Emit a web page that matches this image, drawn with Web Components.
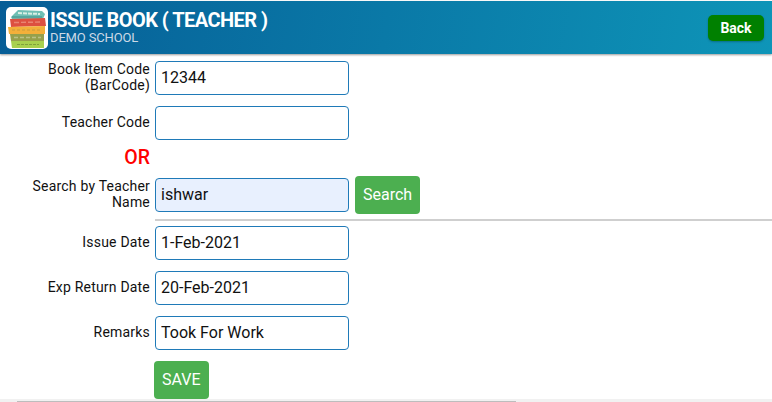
<!DOCTYPE html>
<html lang="en">
<head>
<meta charset="utf-8">
<title>Issue Book</title>
<style>
  html, body { margin: 0; padding: 0; height: 100%; overflow: hidden; background: #fff; }
  body { font-family: Roboto, "Liberation Sans", sans-serif; color: #111; }
</style>
</head>
<body>
<app-header title="ISSUE BOOK ( TEACHER )" school="DEMO SCHOOL"></app-header>
<issue-form></issue-form>
<page-scrollbar></page-scrollbar>

<script>
class AppHeader extends HTMLElement {
  constructor() {
    super();
    this.attachShadow({ mode: "open" });
  }

  connectedCallback() {
    const title = this.getAttribute("title") || "";
    const school = this.getAttribute("school") || "";

    this.shadowRoot.innerHTML = `
      <style>
        :host {
          display: flex;
          align-items: center;
          justify-content: space-between;
          box-sizing: border-box;
          height: 53px;
          margin-top: 1px;
          padding: 0 8px 0 6px;
          background: linear-gradient(100deg, #065d96 0%, #0e95b8 100%);
          box-shadow: 0 1px 2px rgba(0, 0, 0, .4);
          color: #fff;
        }

        .brand {
          display: flex;
          align-items: center;
          gap: 2px;
        }

        .logo {
          display: block;
          width: 42px;
          height: 42px;
          border-radius: 5px;
          background: #fff;
        }

        .title {
          font-size: 20px;
          font-weight: 700;
          line-height: 20px;
          letter-spacing: -.55px;
          margin-top: -1px;
        }

        .school {
          font-size: 13px;
          line-height: 14px;
          letter-spacing: -.15px;
          margin-top: 1px;
          color: #ccd9e6;
        }

        button {
          width: 56px;
          height: 26px;
          padding: 0;
          border: none;
          border-radius: 5px;
          background: #008000;
          color: #fff;
          font: 700 14px Roboto, sans-serif;
          box-shadow: 0 1px 2px rgba(0, 0, 0, .25);
        }
      </style>

      <div class="brand">
        <svg class="logo" viewBox="0 0 42 42">
          <path d="M5 10 L12 3 L36 4 L39 7 L37 12 L6 12 Z" fill="#6fbfb4"/>
          <path d="M12 6 L34 7" stroke="#d8efe4" stroke-width="2" stroke-dasharray="4 1"/>
          <path d="M6 10 L36 10" stroke="#3f8f8a" stroke-width="1"/>
          <path d="M4 12 L39 11 L40 19 L5 20 Z" fill="#dd5040"/>
          <path d="M8 15.500 L36 15" stroke="#e98572" stroke-width="1.500" stroke-dasharray="5 2"/>
          <path d="M2 20 L39 19 L39 27 L3 27 Z" fill="#f3b03a"/>
          <path d="M6 23 L36 23" stroke="#c99a3a" stroke-width="1" stroke-dasharray="3 2"/>
          <path d="M4 27 L38 27 L38 34 L5 34 Z" fill="#96a04c"/>
          <path d="M8 30.500 L35 30.500" stroke="#bcc184" stroke-width="1.500" stroke-dasharray="4 2"/>
          <path d="M5 34 L38 34 L38 41 L6 41 Z" fill="#a8d04e"/>
          <path d="M11 37.500 L33 37.500" stroke="#7fa23a" stroke-width="1" stroke-dasharray="3 1"/>
        </svg>
        <div>
          <div class="title">${title}</div>
          <div class="school">${school}</div>
        </div>
      </div>

      <button>Back</button>
    `;
  }
}

class FormRow extends HTMLElement {
  constructor() {
    super();
    this.attachShadow({ mode: "open" });
  }

  connectedCallback() {
    const label = this.getAttribute("label") || "";
    const value = this.getAttribute("value") || "";
    const bg = this.hasAttribute("filled") ? "#e8f0fe" : "#fff";

    this.shadowRoot.innerHTML = `
      <style>
        :host {
          display: grid;
          grid-template-columns: 150px 194px auto;
          grid-template-rows: 34px;
          column-gap: 5px;
          align-items: center;
          justify-content: start;
          height: 34px;
          margin-bottom: 11px;
        }

        label {
          padding-bottom: 2px;
          font-size: 14px;
          line-height: 16px;
          letter-spacing: .2px;
          text-align: right;
          color: #111;
        }

        input {
          box-sizing: border-box;
          width: 194px;
          height: 34px;
          padding: 0 5px 2px;
          border: 1px solid #1f7ab8;
          border-radius: 4px;
          background: ${bg};
          color: #111;
          font: 16px Roboto, sans-serif;
          outline: none;
        }

        .extra {
          margin-left: 1px;
        }
      </style>

      <label>${label}</label>
      <input type="text" value="${value}">
      <div class="extra"><slot></slot></div>
    `;
  }
}

class GreenButton extends HTMLElement {
  constructor() {
    super();
    this.attachShadow({ mode: "open" });
  }

  connectedCallback() {
    this.shadowRoot.innerHTML = `
      <style>
        :host {
          display: block;
        }

        button {
          display: block;
          height: 38px;
          padding: 0 8px 2px;
          border: none;
          border-radius: 4px;
          background: #4caf50;
          color: #fff;
          font: 16px Roboto, sans-serif;
        }
      </style>

      <button><slot></slot></button>
    `;
  }
}

class IssueForm extends HTMLElement {
  constructor() {
    super();
    this.attachShadow({ mode: "open" });
  }

  connectedCallback() {
    this.shadowRoot.innerHTML = `
      <style>
        :host {
          display: block;
          padding-top: 7px;
        }

        .or {
          width: 150px;
          margin: -4px 0 9px;
          text-align: right;
          color: #ff0000;
          font-size: 19.5px;
          font-weight: 500;
          line-height: 22px;
        }

        hr {
          height: 2px;
          margin: -4px 0 5px 155px;
          border: none;
          background: #cfcfcf;
        }

        .actions {
          padding-left: 154px;
        }

        .actions green-button {
          width: 55px;
        }
      </style>

      <form-row label="Book Item Code (BarCode)" value="12344"></form-row>
      <form-row label="Teacher Code"></form-row>
      <div class="or">OR</div>
      <form-row label="Search by Teacher Name" value="ishwar" filled>
        <green-button>Search</green-button>
      </form-row>
      <hr>
      <form-row label="Issue Date" value="1-Feb-2021"></form-row>
      <form-row label="Exp Return Date" value="20-Feb-2021"></form-row>
      <form-row label="Remarks" value="Took For Work"></form-row>
      <div class="actions"><green-button>SAVE</green-button></div>
    `;
  }
}

// thin horizontal scrollbar sitting over the bottom edge of the page
class PageScrollbar extends HTMLElement {
  constructor() {
    super();
    this.attachShadow({ mode: "open" });
  }

  connectedCallback() {
    this.shadowRoot.innerHTML = `
      <style>
        :host {
          display: block;
          position: fixed;
          left: 0;
          right: 0;
          bottom: 0;
          height: 3px;
          background: #f1f1f1;
        }

        div {
          position: absolute;
          left: 17px;
          bottom: 0;
          width: 499px;
          height: 1px;
          background: #bdbdbd;
        }
      </style>

      <div></div>
    `;
  }
}

customElements.define("app-header", AppHeader);
customElements.define("form-row", FormRow);
customElements.define("green-button", GreenButton);
customElements.define("issue-form", IssueForm);
customElements.define("page-scrollbar", PageScrollbar);
</script>
</body>
</html>
